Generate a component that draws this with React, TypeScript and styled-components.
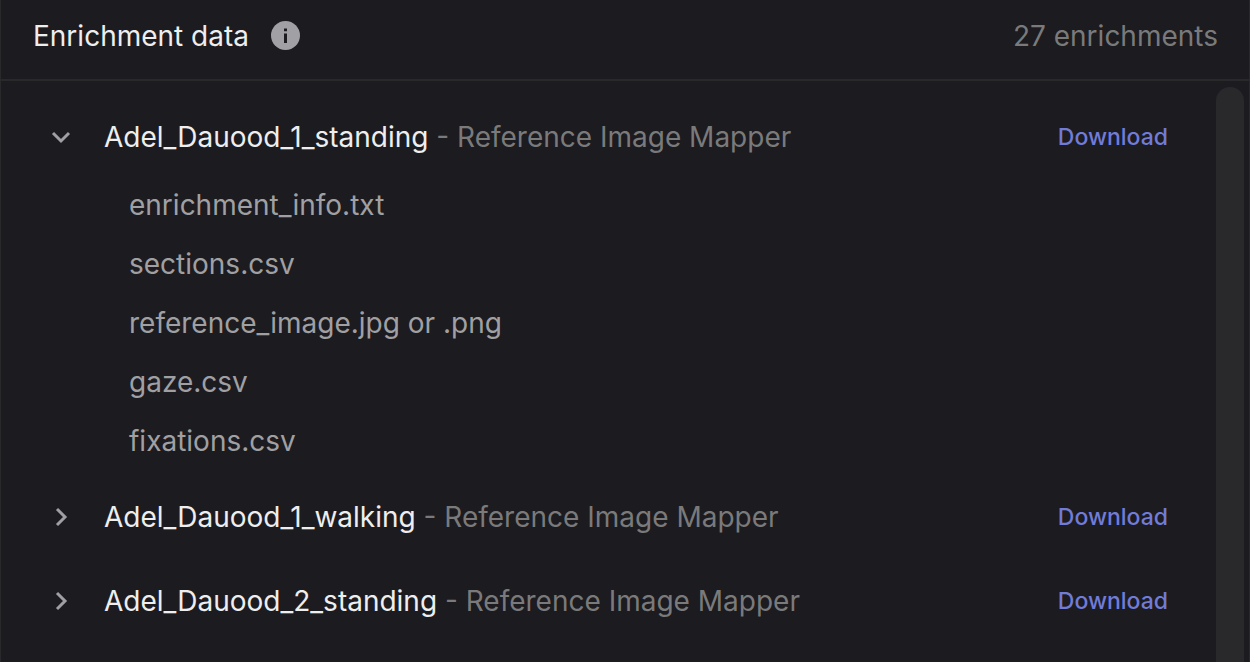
import React, { useState } from "react";
import styled, { createGlobalStyle } from "styled-components";

const GlobalStyle = createGlobalStyle`
  * { box-sizing: border-box; }
  body {
    margin: 0;
    background: #1c1b20;
    color: #eeeeef;
    font-family: Inter, "Liberation Sans", sans-serif;
    font-size: 28px;
    line-height: 36px;
    overflow: hidden;
  }
`;

const Panel = styled.section`
  height: 100vh;
  display: flex;
  flex-direction: column;
  background: #1c1b20;
  border: solid #29292c;
  border-width: 0 1px;
`;

const Header = styled.header`
  display: flex;
  align-items: center;
  flex: none;
  gap: 22px;
  padding: 18px 31px 25px 32px;
  border-bottom: 2px solid #29292c;
`;

const Title = styled.h1`
  margin: 0;
  font: inherit;
`;

const InfoButton = styled.button`
  display: flex;
  padding: 0;
  border: 0;
  background: none;
`;

const Count = styled.span`
  margin-left: auto;
  color: #7a7a7b;
`;

const Body = styled.div`
  display: flex;
  flex: 1;
  min-height: 0;
  padding: 6px 5px 0 0;
`;

const List = styled.ul`
  flex: 1;
  margin: 0;
  padding: 8px 48px 0 48px;
  list-style: none;
  overflow: hidden;
`;

const ScrollThumb = styled.div`
  flex: none;
  width: 28px;
  border-radius: 14px 14px 0 0;
  background: #29292b;
`;

const Row = styled.div`
  display: flex;
  align-items: center;
  height: 84px;
`;

const Toggle = styled.button`
  display: flex;
  align-items: center;
  gap: 31px;
  padding: 0;
  border: 0;
  background: none;
  color: inherit;
  font: inherit;
  text-align: left;
  cursor: pointer;
`;

const Chevron = styled.svg<{ $open: boolean }>`
  flex: none;
  transform: rotate(${(p) => (p.$open ? 90 : 0)}deg);
`;

const Kind = styled.span`
  color: #7a7a7b;
`;

const Download = styled.a`
  margin-left: auto;
  color: #717bd8;
  font-size: 23px;
  font-weight: 500;
  text-decoration: none;
`;

const Files = styled.ul`
  display: flex;
  flex-direction: column;
  gap: 23px;
  margin: 0;
  padding: 8px 0 16px 80px;
  list-style: none;
  color: #a0a0a3;
`;

const enrichments = [
  {
    name: "Adel_Dauood_1_standing",
    files: ["enrichment_info.txt", "sections.csv", "reference_image.jpg or .png", "gaze.csv", "fixations.csv"],
  },
  { name: "Adel_Dauood_1_walking", files: [] },
  { name: "Adel_Dauood_2_standing", files: [] },
];

export default function App() {
  const [openName, setOpenName] = useState(enrichments[0].name);
  return (
    <Panel>
      <GlobalStyle />
      <Header>
        <Title>Enrichment data</Title>
        <InfoButton aria-label="About enrichment data">
          <svg width="30" height="30" viewBox="0 0 30 30" aria-hidden="true">
            <circle cx="14.5" cy="14.5" r="14.5" fill="#a0a0a5" />
            <path d="M13 7.5H16V10.3H13ZM13 12.5H16V22H13Z" fill="#1c1b20" />
          </svg>
        </InfoButton>
        <Count>27 enrichments</Count>
      </Header>
      <Body>
        <List>
          {enrichments.map(({ name, files }) => {
            const open = openName === name;
            return (
              <li key={name}>
                <Row>
                  <Toggle aria-expanded={open} onClick={() => setOpenName(open ? "" : name)}>
                    <Chevron $open={open} width="24" height="24" viewBox="0 0 24 24" aria-hidden="true">
                      <path d="M8 4L16 12L8 20" fill="none" stroke="#a0a0a3" strokeWidth="3" />
                    </Chevron>
                    <span>
                      {name} <Kind>- Reference Image Mapper</Kind>
                    </span>
                  </Toggle>
                  <Download href="#download">Download</Download>
                </Row>
                {open && files.length > 0 && (
                  <Files>
                    {files.map((file) => (
                      <li key={file}>{file}</li>
                    ))}
                  </Files>
                )}
              </li>
            );
          })}
        </List>
        <ScrollThumb />
      </Body>
    </Panel>
  );
}
